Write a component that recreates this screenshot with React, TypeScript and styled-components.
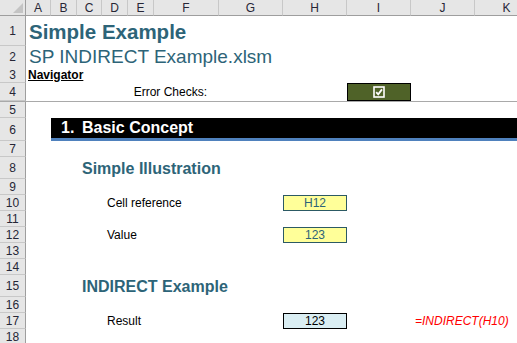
import React from 'react';
import styled, { createGlobalStyle, css } from 'styled-components';

const GlobalStyle = createGlobalStyle`
  html, body { margin: 0; padding: 0; background: #ffffff; overflow: hidden; }
  body { font-family: "Liberation Sans", Arial, sans-serif; }
`;

const COLS = '26px 25px 26px 25px 26px 26px 65px 64px 64px 64px 64px 64px';
const TEAL = '#2d6478';

const Sheet = styled.div`
  width: 517px;
  height: 343px;
  overflow: hidden;
  display: flex;
  flex-direction: column;
  font-family: "Liberation Sans", Arial, sans-serif;
`;

const Row = styled.div<{ $h: number; $freeze?: boolean }>`
  display: grid;
  grid-template-columns: ${COLS};
  height: ${p => p.$h}px;
  flex: none;
  box-sizing: border-box;
  ${p => p.$freeze && css`border-bottom: 1px solid #a9a9a9;`}
`;

const Corner = styled.div`
  background: #e6e6e6;
  border-right: 1px solid #9e9e9e;
  border-bottom: 1px solid #9e9e9e;
  box-sizing: border-box;
  display: flex;
  align-items: flex-end;
  justify-content: flex-end;
  padding: 0 2px 2px 0;
`;

const ColHead = styled.div`
  background: #e6e6e6;
  border-right: 1px solid #c8c8c8;
  border-bottom: 1px solid #9e9e9e;
  box-sizing: border-box;
  display: flex;
  align-items: center;
  justify-content: center;
  font-size: 12px;
  color: #262636;
`;

const RowHead = styled.div`
  background: #e6e6e6;
  border-right: 1px solid #9e9e9e;
  border-bottom: 1px solid #c8c8c8;
  box-sizing: border-box;
  display: flex;
  align-items: center;
  justify-content: center;
  padding-top: 1px;
  font-size: 12px;
  color: #262636;
`;

const Cell = styled.div<{ $col: number; $span?: number }>`
  grid-column: ${p => p.$col} / span ${p => p.$span ?? 1};
  display: flex;
  align-items: center;
  white-space: nowrap;
  min-width: 0;
  box-sizing: border-box;
  font-size: 12px;
  color: #000;
`;

const Title = styled(Cell)`
  font-size: 20.5px;
  font-weight: bold;
  color: ${TEAL};
  padding-left: 3px;
  padding-top: 1px;
`;

const Subtitle = styled(Cell)`
  font-size: 19px;
  color: ${TEAL};
  padding-left: 3px;
`;

const NavLink = styled(Cell)`
  font-weight: bold;
  text-decoration: underline;
  padding-left: 2px;
`;

const RightLabel = styled(Cell)`
  justify-content: flex-end;
  padding-right: 12px;
`;

const Label = styled(Cell)`
  padding-left: 5px;
`;

const CheckCell = styled(Cell)`
  background: #4f6228;
  border: 1px solid #000;
  justify-content: center;
`;

const SectionBar = styled(Cell)`
  background: #000;
  border-bottom: 3px solid #4f81bd;
  color: #fff;
  font-size: 16px;
  font-weight: bold;
  padding-left: 10px;
`;

const SectionNum = styled.span`
  display: inline-block;
  width: 21px;
`;

const Heading = styled(Cell)`
  font-size: 16px;
  font-weight: bold;
  color: ${TEAL};
  padding-left: 5px;
  padding-top: 2px;
`;

const ValueBox = styled(Cell)<{ $kind: 'input' | 'output' }>`
  justify-content: center;
  ${p =>
    p.$kind === 'input'
      ? css`
          background: #ffff99;
          border: 1px solid #2c5a64;
          color: ${TEAL};
        `
      : css`
          background: #daeef3;
          border: 1px solid #000;
          color: #000;
        `}
`;

const Formula = styled(Cell)`
  color: #ff0000;
  font-style: italic;
  padding-left: 4px;
`;

const letters = ['A', 'B', 'C', 'D', 'E', 'F', 'G', 'H', 'I', 'J', 'K'];

const CheckIcon = () => (
  <svg width="12" height="12" viewBox="0 0 12 12">
    <rect x="1" y="1" width="10" height="10" fill="none" stroke="#fff" strokeWidth="1.6" />
    <path d="M3.2 6.2 L5.2 8.3 L9 3.4" fill="none" stroke="#fff" strokeWidth="1.8" />
  </svg>
);

const CornerMark = () => (
  <svg width="10" height="10" viewBox="0 0 10 10">
    <polygon points="10,0 10,10 0,10" fill="#c4c4c4" />
  </svg>
);

type RowSpec = { n: number; h: number; freeze?: boolean; content?: React.ReactNode };

const rows: RowSpec[] = [
  { n: 1, h: 30, content: <Title $col={2} $span={9}>Simple Example</Title> },
  { n: 2, h: 21, content: <Subtitle $col={2} $span={10}>SP INDIRECT Example.xlsm</Subtitle> },
  { n: 3, h: 16, content: <NavLink $col={2} $span={4}>Navigator</NavLink> },
  {
    n: 4,
    h: 19,
    freeze: true,
    content: (
      <>
        <RightLabel $col={5} $span={3}>Error Checks:</RightLabel>
        <CheckCell $col={10}>
          <CheckIcon />
        </CheckCell>
      </>
    ),
  },
  { n: 5, h: 16 },
  {
    n: 6,
    h: 23,
    content: (
      <SectionBar $col={3} $span={10}>
        <SectionNum>1.</SectionNum>Basic Concept
      </SectionBar>
    ),
  },
  { n: 7, h: 16 },
  { n: 8, h: 22, content: <Heading $col={4} $span={5}>Simple Illustration</Heading> },
  { n: 9, h: 16 },
  {
    n: 10,
    h: 16,
    content: (
      <>
        <Label $col={5} $span={3}>Cell reference</Label>
        <ValueBox $col={9} $kind="input">H12</ValueBox>
      </>
    ),
  },
  { n: 11, h: 16 },
  {
    n: 12,
    h: 16,
    content: (
      <>
        <Label $col={5} $span={3}>Value</Label>
        <ValueBox $col={9} $kind="input">123</ValueBox>
      </>
    ),
  },
  { n: 13, h: 16 },
  { n: 14, h: 16 },
  { n: 15, h: 22, content: <Heading $col={4} $span={5}>INDIRECT Example</Heading> },
  { n: 16, h: 16 },
  {
    n: 17,
    h: 16,
    content: (
      <>
        <Label $col={5} $span={3}>Result</Label>
        <ValueBox $col={9} $kind="output">123</ValueBox>
        <Formula $col={11} $span={2}>=INDIRECT(H10)</Formula>
      </>
    ),
  },
  { n: 18, h: 16 },
];

export default function App() {
  return (
    <>
      <GlobalStyle />
      <Sheet>
        <Row $h={16}>
          <Corner>
            <CornerMark />
          </Corner>
          {letters.map(l => (
            <ColHead key={l}>{l}</ColHead>
          ))}
        </Row>
        {rows.map(r => (
          <Row key={r.n} $h={r.h} $freeze={r.freeze}>
            <RowHead>{r.n}</RowHead>
            {r.content}
          </Row>
        ))}
      </Sheet>
    </>
  );
}
